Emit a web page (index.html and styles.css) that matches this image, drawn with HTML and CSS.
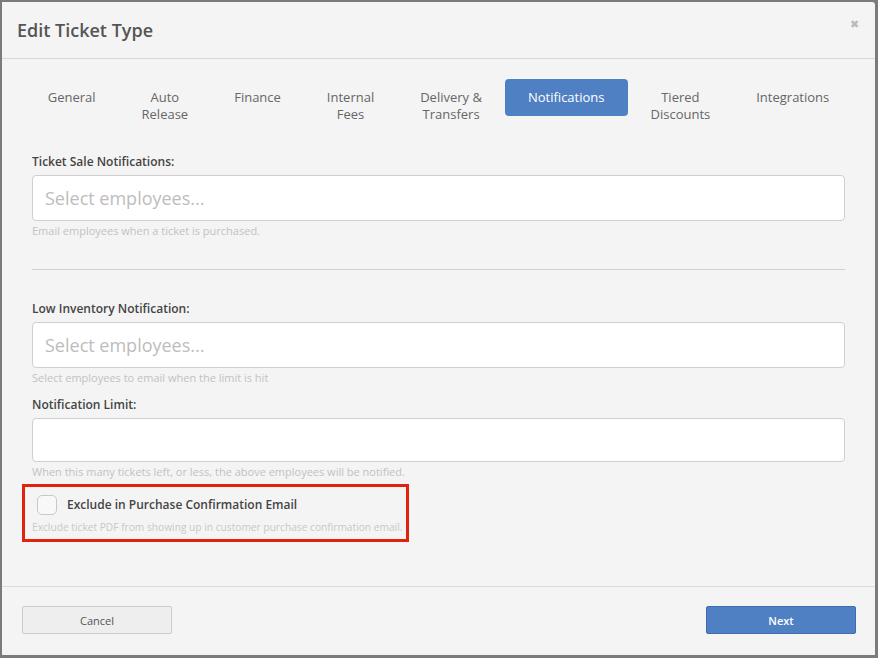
FILE: index.html
```html
<!DOCTYPE html>
<html>
<head>
<meta charset="utf-8">
<link rel="stylesheet" href="styles.css">
</head>
<body>
<div class="modal">
  <div class="modal-header">
    <h1 class="title">Edit Ticket Type</h1>
    <span class="close">&#x2716;</span>
  </div>
  <div class="modal-body">
    <ul class="tabs">
      <li class="tab">General</li>
      <li class="tab">Auto<br>Release</li>
      <li class="tab">Finance</li>
      <li class="tab">Internal<br>Fees</li>
      <li class="tab">Delivery &amp;<br>Transfers</li>
      <li class="tab active">Notifications</li>
      <li class="tab">Tiered<br>Discounts</li>
      <li class="tab">Integrations</li>
    </ul>

    <div class="group first">
      <label class="label">Ticket Sale Notifications:</label>
      <div class="input select"><span class="placeholder">Select employees...</span></div>
      <p class="help">Email employees when a ticket is purchased.</p>
    </div>

    <hr class="divider">

    <div class="group">
      <label class="label">Low Inventory Notification:</label>
      <div class="input select"><span class="placeholder">Select employees...</span></div>
      <p class="help">Select employees to email when the limit is hit</p>
    </div>

    <div class="group limit">
      <label class="label">Notification Limit:</label>
      <div class="input short"></div>
      <p class="help">When this many tickets left, or less, the above employees will be notified.</p>
    </div>

    <div class="highlight">
      <div class="check-row">
        <span class="checkbox"></span>
        <span class="check-label">Exclude in Purchase Confirmation Email</span>
      </div>
      <p class="help small">Exclude ticket PDF from showing up in customer purchase confirmation email.</p>
    </div>
  </div>
  <div class="modal-footer">
    <button class="btn cancel">Cancel</button>
    <button class="btn next">Next</button>
  </div>
</div>
</body>
</html>
```
FILE: styles.css
```css
* { box-sizing: border-box; }
html, body { margin: 0; padding: 0; }
body {
  background: #7b7b7b;
  font-family: "Open Sans", "Noto Sans", sans-serif;
  width: 878px;
  height: 658px;
  overflow: hidden;
}
.modal {
  margin: 2px 3px 3px 2px;
  height: 653px;
  background: #f4f4f4;
  border-top-right-radius: 3px;
  display: flex;
  flex-direction: column;
}
.modal-header {
  height: 57px;
  border-bottom: 1px solid #d8d8d8;
  display: flex;
  align-items: center;
  justify-content: space-between;
  padding: 0 16px 0 15px;
}
.title {
  margin: 0;
  font-size: 18px;
  font-weight: 600;
  color: #555;
}
.close {
  font-size: 11px;
  color: #bbb;
  margin-top: -14px;
}
.modal-body {
  flex: 1;
  padding: 20px 30px 0 30px;
}
.tabs {
  list-style: none;
  margin: 0 -9px 0 -9px;
  padding: 0;
  display: flex;
  justify-content: center;
  height: 37px;
}
.tab {
  padding: 10px 23px;
  font-size: 13px;
  line-height: 17px;
  color: #666;
  text-align: center;
  border-radius: 4px;
  white-space: nowrap;
  height: 37px;
  overflow: visible;
}
.tab.active {
  background: #5080c4;
  color: #fff;
}
.group.first { margin-top: 37px; }
.group { margin-top: 30px; }
.group.limit { margin-top: 10px; }
.label {
  display: block;
  font-size: 12px;
  line-height: 17px;
  font-weight: 600;
  color: #444;
  margin-bottom: 5px;
}
.input {
  background: #fff;
  border: 1px solid #cfcfcf;
  border-radius: 4px;
  height: 46px;
  display: flex;
  align-items: center;
  padding: 0 12px;
}
.input.short { height: 44px; }
.placeholder {
  font-size: 18px;
  color: #bdbdbd;
}
.help {
  margin: 2px 0 0 0;
  font-size: 11px;
  line-height: 16px;
  color: #c2c2c2;
}
.divider {
  border: 0;
  border-top: 1px solid #d0d0d0;
  margin: 30px 0 0 0;
  height: 0;
}
.highlight {
  margin: 4px 0 0 -10px;
  width: 387px;
  height: 58px;
  border: 3px solid #e0230f;
  padding: 8px 0 0 12px;
}
.check-row {
  display: flex;
  align-items: center;
  height: 20px;
}
.checkbox {
  width: 20px;
  height: 20px;
  border: 1px solid #c8c8c8;
  border-radius: 5px;
  background: #f8f8f8;
  margin-right: 10px;
}
.check-label {
  font-size: 12px;
  font-weight: 600;
  color: #444;
  margin-top: -1px;
}
.help.small {
  font-size: 10.2px;
  line-height: 14px;
  margin: 5px 0 0 -5px;
  color: #c8c8c8;
}
.modal-footer {
  height: 69px;
  border-top: 1px solid #dcdcdc;
  display: flex;
  justify-content: space-between;
  align-items: flex-start;
  padding: 19px 19px 0 20px;
}
.btn {
  width: 150px;
  height: 28px;
  font-family: "Open Sans", "Noto Sans", sans-serif;
  font-size: 11px;
  border-radius: 2px;
  cursor: pointer;
}
.btn.cancel {
  background: #eeeeee;
  border: 1px solid #cccccc;
  color: #555;
}
.btn.next {
  background: #5080c4;
  border: 1px solid #3d6cb0;
  color: #fff;
  font-weight: 600;
}
```
